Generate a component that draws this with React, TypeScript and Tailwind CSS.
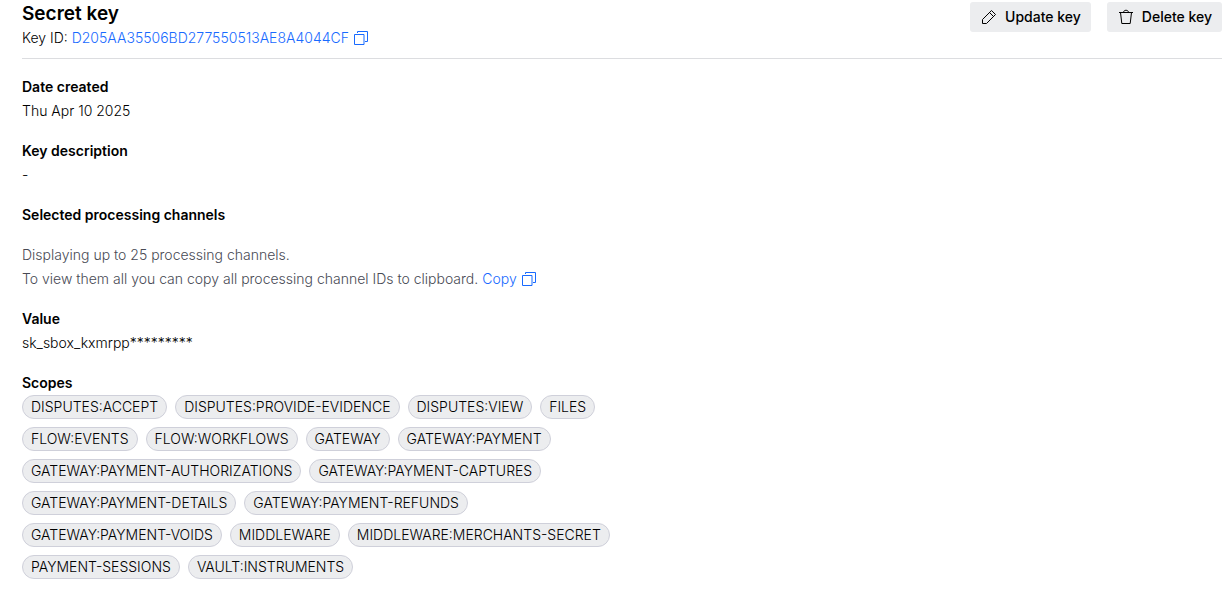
import React from "react";

const scopes = [
  "DISPUTES:ACCEPT", "DISPUTES:PROVIDE-EVIDENCE", "DISPUTES:VIEW", "FILES",
  "FLOW:EVENTS", "FLOW:WORKFLOWS", "GATEWAY", "GATEWAY:PAYMENT",
  "GATEWAY:PAYMENT-AUTHORIZATIONS", "GATEWAY:PAYMENT-CAPTURES",
  "GATEWAY:PAYMENT-DETAILS", "GATEWAY:PAYMENT-REFUNDS",
  "GATEWAY:PAYMENT-VOIDS", "MIDDLEWARE", "MIDDLEWARE:MERCHANTS-SECRET",
  "PAYMENT-SESSIONS", "VAULT:INSTRUMENTS",
];

function CopyIcon() {
  return (
    <svg className="size-4" viewBox="0 0 16 16" fill="none" stroke="currentColor" aria-hidden="true">
      <path d="M1.5 4.5H11v10H1.5z" />
      <path d="M4.5 3V1.5h10v10H12" />
    </svg>
  );
}

function PencilIcon() {
  return (
    <svg className="size-4" viewBox="0 0 16 16" fill="none" stroke="currentColor" strokeLinejoin="round" aria-hidden="true">
      <path d="M1.5 14.5v-4l9-9 4 4-9 9z" />
      <path d="M8.5 3.5l4 4" />
    </svg>
  );
}

function TrashIcon() {
  return (
    <svg className="size-4" viewBox="0 0 16 16" fill="none" stroke="currentColor" aria-hidden="true">
      <path d="M1 3.5h14M5.5 3.5c0-3 5-3 5 0M2.5 3.5l1.3 11h8.4l1.3-11" />
    </svg>
  );
}

function ActionButton({ icon, children }: { icon: React.ReactNode; children: React.ReactNode }) {
  return (
    <button type="button" className="flex h-[30px] items-center gap-2 rounded-[3px] bg-[#ecedef] pr-2.5 pl-[11px] font-medium">
      {icon}
      {children}
    </button>
  );
}

function Field({ label, children }: { label: string; children: React.ReactNode }) {
  return (
    <section>
      <h2 className="font-semibold">{label}</h2>
      {children}
    </section>
  );
}

export default function App() {
  return (
    <main className="pr-0.5 pl-[22px] pt-0.5 font-['Inter',sans-serif] text-sm leading-6 font-light text-black">
      <header className="flex items-start justify-between border-b border-[#dcdde0] pb-2">
        <div>
          <h1 className="text-[19px] leading-6 font-semibold">Secret key</h1>
          <p className="flex items-center">
            Key ID:&nbsp;
            <button type="button" className="flex items-center gap-1 text-[#186aff]">
              D205AA35506BD277550513AE8A4044CF <CopyIcon />
            </button>
          </p>
        </div>
        <div className="flex gap-4">
          <ActionButton icon={<PencilIcon />}>Update key</ActionButton>
          <ActionButton icon={<TrashIcon />}>Delete key</ActionButton>
        </div>
      </header>
      <div className="flex flex-col gap-4 pt-4">
        <Field label="Date created"><p>Thu Apr 10 2025</p></Field>
        <Field label="Key description"><p>-</p></Field>
        <Field label="Selected processing channels">
          <div className="pt-4 text-[#484a54]">
            <p>Displaying up to 25 processing channels.</p>
            <p className="flex items-center gap-1">
              To view them all you can copy all processing channel IDs to clipboard.
              <button type="button" className="flex items-center gap-1 text-[#186aff]">Copy <CopyIcon /></button>
            </p>
          </div>
        </Field>
        <Field label="Value"><p>sk_sbox_kxmrpp*********</p></Field>
        <Field label="Scopes">
          <ul className="flex max-w-[600px] flex-wrap gap-2">
            {scopes.map((scope) => (
              <li key={scope} className="h-6 rounded-full border border-[#cfd0da] bg-[#ecedef] px-2 leading-[22px]">{scope}</li>
            ))}
          </ul>
        </Field>
      </div>
    </main>
  );
}
